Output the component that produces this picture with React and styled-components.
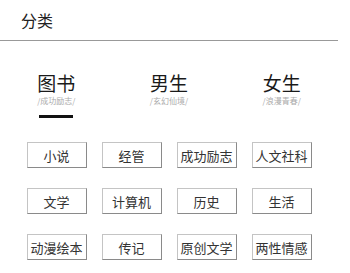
import styled, { createGlobalStyle } from "styled-components";

const GlobalStyle = createGlobalStyle`
  body {
    margin: 0;
    background: #fff;
    font-family: "Noto Sans CJK SC", "Noto Sans", sans-serif;
  }
`;

const tabs = [
  { title: "图书", sub: "/成功励志/", active: true },
  { title: "男生", sub: "/玄幻仙境/" },
  { title: "女生", sub: "/浪漫青春/" },
];

const cats = [
  "小说", "经管", "成功励志", "人文社科",
  "文学", "计算机", "历史", "生活",
  "动漫绘本", "传记", "原创文学", "两性情感",
];

const App = () => {
  return (
    <Page>
      <GlobalStyle />
      <Header>分类</Header>
      <Tabs>
        {tabs.map((t) => (
          <Tab key={t.title}>
            <TabTitle>{t.title}</TabTitle>
            <TabSub>{t.sub}</TabSub>
            <Underline $active={t.active} />
          </Tab>
        ))}
      </Tabs>
      <Grid>
        {cats.map((c) => (
          <CatButton key={c}>{c}</CatButton>
        ))}
      </Grid>
    </Page>
  );
};

const Page = styled.div`
  width: 338px;
`;
const Header = styled.div`
  box-sizing: border-box;
  height: 41px;
  padding: 11px 0 0 21px;
  font-size: 16px;
  line-height: 18px;
  color: #222;
  border-bottom: 1px solid #999;
`;
const Tabs = styled.div`
  display: flex;
  padding-top: 32px;
`;
const Tab = styled.div`
  flex: 1;
  display: flex;
  flex-direction: column;
  align-items: center;
`;
const TabTitle = styled.div`
  font-size: 19px;
  line-height: 20px;
  color: #1a1a1a;
`;
const TabSub = styled.div`
  font-size: 8px;
  line-height: 10px;
  color: #aaa;
  margin-top: 3px;
`;
const Underline = styled.div`
  width: 34px;
  height: 3px;
  margin-top: 9px;
  background: ${({ $active }) => ($active ? "#111" : "transparent")};
`;
const Grid = styled.div`
  display: grid;
  grid-template-columns: repeat(4, 60px);
  grid-auto-rows: 26px;
  column-gap: 15px;
  row-gap: 20px;
  width: 285px;
  margin: 24px auto 0;
`;
const CatButton = styled.div`
  box-sizing: border-box;
  display: flex;
  align-items: center;
  justify-content: center;
  font-size: 13px;
  color: #333;
  border: 1px solid #c4c4c4;
  border-right-color: #8a8a8a;
  border-bottom-color: #8a8a8a;
  white-space: nowrap;
`;

export default App;
